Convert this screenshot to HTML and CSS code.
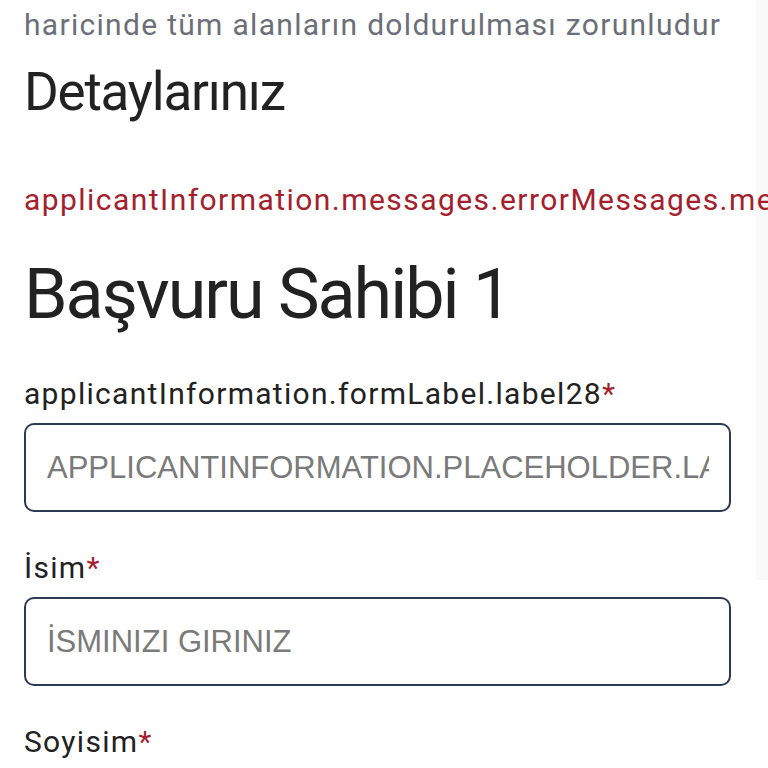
FILE: index.html
```html
<!DOCTYPE html>
<html lang="tr">
<head>
<meta charset="utf-8">
<link rel="stylesheet" href="styles.css">
</head>
<body>
<div class="page">
  <main class="content">
    <p class="note">haricinde tüm alanların doldurulması zorunludur</p>
    <h2 class="section-title">Detaylarınız</h2>
    <p class="error">applicantInformation.messages.errorMessages.message1</p>
    <h1 class="applicant-title">Başvuru Sahibi 1</h1>
    <div class="field first">
      <label class="label">applicantInformation.formLabel.label28<span class="req">*</span></label>
      <div class="input"><span class="placeholder">APPLICANTINFORMATION.PLACEHOLDER.LABEL28</span></div>
    </div>
    <div class="field">
      <label class="label">İsim<span class="req">*</span></label>
      <div class="input"><span class="placeholder">İSMINIZI GIRINIZ</span></div>
    </div>
    <div class="field">
      <label class="label">Soyisim<span class="req">*</span></label>
    </div>
  </main>
</div>
</body>
</html>
```
FILE: styles.css
```css
html, body {
  margin: 0;
  padding: 0;
  background: #ffffff;
  overflow: hidden;
}
.page {
  width: 768px;
  height: 768px;
  overflow: hidden;
  background: linear-gradient(#f9f9f9, #f9f9f9) right top / 12px 580px no-repeat, #ffffff;
}
.content {
  padding: 0 0 0 24px;
  font-family: Roboto, "Noto Sans", sans-serif;
  color: #222222;
}
.note {
  margin: 0;
  padding-top: 5px;
  font-size: 30px;
  line-height: 40px;
  letter-spacing: 1.3px;
  color: #6b6f77;
  white-space: nowrap;
}
.section-title {
  margin: 17px 0 0;
  font-size: 53px;
  font-weight: 400;
  line-height: 60px;
  letter-spacing: -1.2px;
  color: #222222;
}
.error {
  margin: 58px 0 0;
  font-size: 30px;
  line-height: 40px;
  letter-spacing: 1.45px;
  color: #a3212c;
  white-space: nowrap;
}
.applicant-title {
  margin: 34px 0 0;
  font-size: 70px;
  font-weight: 400;
  line-height: 80px;
  letter-spacing: -2px;
  color: #222222;
}
.field {
  display: flex;
  flex-direction: column;
  width: 707px;
  margin-top: 36px;
}
.field.first {
  margin-top: 40px;
}
.label {
  font-size: 30px;
  line-height: 40px;
  letter-spacing: 1.3px;
  color: #222222;
  margin-bottom: 9px;
  white-space: nowrap;
}
.req {
  color: #a3212c;
}
.input {
  box-sizing: border-box;
  height: 89px;
  border: 2px solid #2c3a56;
  border-radius: 10px;
  padding: 0 20px 0 21px;
  display: flex;
  align-items: center;
  overflow: hidden;
}
.placeholder {
  font-family: "Liberation Sans", Arial, sans-serif;
  font-size: 31px;
  color: #7a7a7a;
  white-space: nowrap;
  overflow: hidden;
}
```
